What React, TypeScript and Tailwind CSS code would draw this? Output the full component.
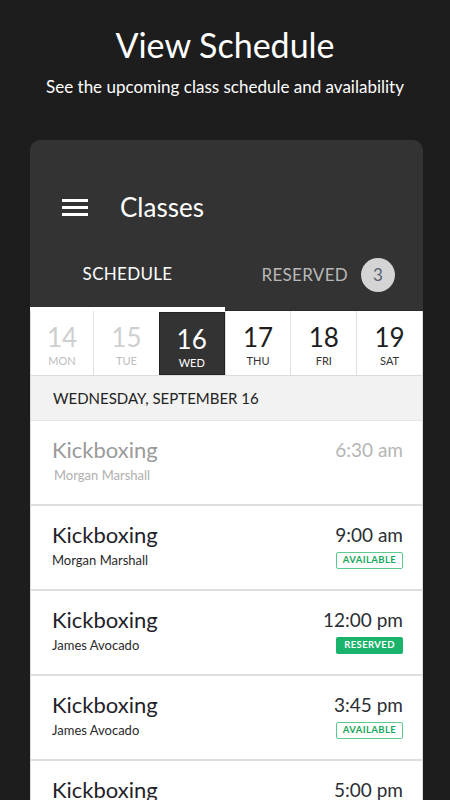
import React from "react";

const days = [
  { n: "14", d: "MON", state: "past" },
  { n: "15", d: "TUE", state: "past" },
  { n: "16", d: "WED", state: "sel" },
  { n: "17", d: "THU", state: "up" },
  { n: "18", d: "FRI", state: "up" },
  { n: "19", d: "SAT", state: "up" },
];

const classes = [
  { t: "Kickboxing", who: "Morgan Marshall", time: "6:30 am", status: "past" },
  { t: "Kickboxing", who: "Morgan Marshall", time: "9:00 am", status: "available" },
  { t: "Kickboxing", who: "James Avocado", time: "12:00 pm", status: "reserved" },
  { t: "Kickboxing", who: "James Avocado", time: "3:45 pm", status: "available" },
  { t: "Kickboxing", who: "James Avocado", time: "5:00 pm", status: "available" },
];

export default function App() {
  return (
    <div
      className="w-[450px] h-[800px] overflow-hidden bg-[#1d1d1d] flex flex-col items-center"
      style={{ fontFamily: "Lato, 'Open Sans', sans-serif" }}
    >
      <h1 className="mt-[25px] text-[34px] leading-[40px] text-white font-normal">View Schedule</h1>
      <p className="mt-[10px] text-[17px] leading-[24px] text-white">
        See the upcoming class schedule and availability
      </p>
      <div className="mt-[41px] w-[393px] self-start ml-[30px] rounded-t-[10px] overflow-hidden flex flex-col flex-1">
        <div className="bg-[#333333]">
          <div className="pt-[34px] h-[100px] flex items-start">
            <div className="h-[66px] flex items-center">
              <div className="ml-[32px] w-[26px] flex flex-col gap-[4px]">
                <div className="h-[3px] bg-white"></div>
                <div className="h-[3px] bg-white"></div>
                <div className="h-[3px] bg-white"></div>
              </div>
              <span className="ml-[32px] text-[26px] text-white">Classes</span>
            </div>
          </div>
          <div className="flex h-[71px]">
            <div className="w-[195px] flex flex-col">
              <div className="flex-1 flex items-center justify-center text-[17px] text-white tracking-[0.3px]">
                SCHEDULE
              </div>
              <div className="h-[4px] bg-white"></div>
            </div>
            <div className="flex-1 flex flex-col">
              <div className="flex-1 flex items-center justify-end pr-[28px] gap-[13px]">
                <span className="text-[17px] text-[#b8b8b8] tracking-[0.3px]">RESERVED</span>
                <span className="w-[34px] h-[34px] rounded-full bg-[#d4d4d4] flex items-center justify-center text-[17px] text-[#5a6170]">
                  3
                </span>
              </div>
              <div className="h-[1px] bg-[#2a2a2a]"></div>
            </div>
          </div>
        </div>
        <div className="bg-white flex-1 border-x border-[#dcdcdc]">
          <div className="grid grid-cols-[62px_repeat(5,1fr)] h-[65px] border-b border-[#dcdcdc]">
            {days.map((d, i) => (
              <div
                key={d.n}
                className={
                  "flex flex-col items-center pt-[11px] " +
                  (d.state === "sel"
                    ? "bg-[#333333] border border-[#222] text-white mt-[1px]"
                    : (i > 0 ? "border-l border-[#e0e0e0] " : "") +
                      (d.state === "past" ? "text-[#cfcfcf]" : "text-[#1e1e1e]"))
                }
              >
                <span className="text-[26px] leading-[30px]">{d.n}</span>
                <span
                  className={
                    "text-[11px] leading-[14px] mt-[2px] " +
                    (d.state === "past" ? "text-[#bdbdbd]" : d.state === "sel" ? "text-white" : "text-[#333]")
                  }
                >
                  {d.d}
                </span>
              </div>
            ))}
          </div>
          <div className="h-[45px] bg-[#f2f2f2] border-b border-[#e3e3e3] flex items-center pl-[22px] text-[15px] text-[#222]">
            WEDNESDAY, SEPTEMBER 16
          </div>
          {classes.map((c, i) => {
            const past = c.status === "past";
            return (
              <div key={i} className="h-[85px] border-b-2 border-[#dedede] flex justify-between pl-[21px] pr-[19px] pt-[15px]">
                <div className="flex flex-col">
                  <span className={"text-[22px] leading-[28px] " + (past ? "text-[#9a9a9a]" : "text-[#1f2329]")}>{c.t}</span>
                  <span className={"mt-[2px] text-[13px] leading-[18px] " + (past ? "text-[#b0b0b0] pl-[2px]" : "text-[#2a2a2a]")}>
                    {c.who}
                  </span>
                </div>
                <div className="flex flex-col items-end">
                  <span className={"text-[19px] leading-[28px] " + (past ? "text-[#b5b5b5]" : "text-[#2b2f36]")}>{c.time}</span>
                  {c.status === "available" && (
                    <span className="mt-[3px] w-[67px] h-[17px] border border-[#5cc98f] rounded-[2px] flex items-center justify-center text-[9.5px] font-bold text-[#16a85c] tracking-[0.4px]">
                      AVAILABLE
                    </span>
                  )}
                  {c.status === "reserved" && (
                    <span className="mt-[3px] w-[67px] h-[17px] bg-[#19b36b] rounded-[2px] flex items-center justify-center text-[9.5px] font-bold text-white tracking-[0.4px]">
                      RESERVED
                    </span>
                  )}
                </div>
              </div>
            );
          })}
        </div>
      </div>
    </div>
  );
}
